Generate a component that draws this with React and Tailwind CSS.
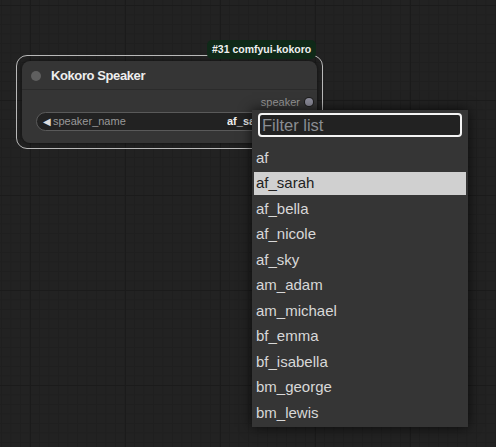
import React from "react";

const voices = [
  "af",
  "af_sarah",
  "af_bella",
  "af_nicole",
  "af_sky",
  "am_adam",
  "am_michael",
  "bf_emma",
  "bf_isabella",
  "bm_george",
  "bm_lewis",
];

const NodeCard = () => {
  return (
    <div className="absolute left-[16px] top-[55px] w-[307px] h-[94px] rounded-[11px] border border-[#b8b8b8] p-[5px]">
      {/* badge */}
      <div className="absolute left-[190px] top-[-16px] h-[19px] px-[5px] rounded-[5px] bg-[#0f2918] flex items-center text-[10.5px] font-bold text-[#f0f0f0] z-10">
        #31 comfyui-kokoro
      </div>

      <div className="h-full rounded-[8px] bg-[#353535] shadow-[0_0_4px_rgba(0,0,0,0.6)] flex flex-col">
        {/* title */}
        <div className="h-[29px] flex items-center border-b border-[#2b2b2b] pl-[9px] pt-[1px]">
          <div className="w-[10px] h-[10px] rounded-full bg-[#5f5f5f]" />
          <span className="ml-[10px] text-[13px] font-bold tracking-[-0.4px] text-[#eeeeee]">
            Kokoro Speaker
          </span>
        </div>

        {/* output */}
        <div className="mt-[4px] h-[16px] flex items-center justify-end pr-[4px] gap-[5px]">
          <span className="text-[11px] text-[#9a9a9a]">speaker</span>
          <div className="w-[8px] h-[8px] rounded-full bg-[#8a8a98] ring-1 ring-[#1e1e1e]" />
        </div>

        {/* widget, right part sits under the open list */}
        <div className="mt-[2px] mx-[14px] h-[19px] rounded-full border border-[#5a5a5a] bg-[#222222] flex items-center pl-[6px] pr-[50px] text-[11px]">
          <span className="text-[#dddddd] text-[10px]">◀</span>
          <span className="ml-[2px] text-[#999999]">speaker_name</span>
          <span className="ml-auto w-[25px] overflow-hidden whitespace-nowrap font-bold text-[#eeeeee]">
            af_sarah
          </span>
        </div>
      </div>
    </div>
  );
};

const FilterMenu = () => {
  return (
    <div className="absolute left-[252px] top-[110px] w-[216px] h-[317px] bg-[#353535] shadow-[0_0_12px_rgba(0,0,0,0.75)] flex flex-col">
      <div className="mt-[3px] mx-[6px] h-[24px] rounded-[4px] border-2 border-[#f4f4f4] bg-[#222222] flex items-center pl-[2px]">
        <span className="text-[16.5px] text-[#8a8d92] leading-none">Filter list</span>
      </div>
      <div className="mt-[9.5px] mx-[2px] flex flex-col gap-[2.5px]">
        {voices.map((v) => (
          <div
            key={v}
            className={
              v === "af_sarah"
                ? "h-[23px] flex items-center pl-[2px] bg-[#d0d0d0] text-[#222222] text-[15px]"
                : "h-[23px] flex items-center pl-[2px] text-[#d8d8d8] text-[15px]"
            }
          >
            {v}
          </div>
        ))}
      </div>
    </div>
  );
};

export default function App() {
  return (
    <div
      className="relative w-[496px] h-[447px] overflow-hidden bg-[#222222] bg-[linear-gradient(to_right,#1b1b1b_1px,transparent_1px),linear-gradient(to_bottom,#1b1b1b_1px,transparent_1px),linear-gradient(to_right,#1f1f1f_1px,transparent_1px),linear-gradient(to_bottom,#1f1f1f_1px,transparent_1px)] bg-[length:95px_95px,95px_95px,9.5px_9.5px,9.5px_9.5px] bg-[position:30px_5px,30px_5px,1px_5px,1px_5px]"
      style={{ fontFamily: '"Liberation Sans", Arial, sans-serif' }}
    >
      <NodeCard />
      <FilterMenu />
    </div>
  );
}
